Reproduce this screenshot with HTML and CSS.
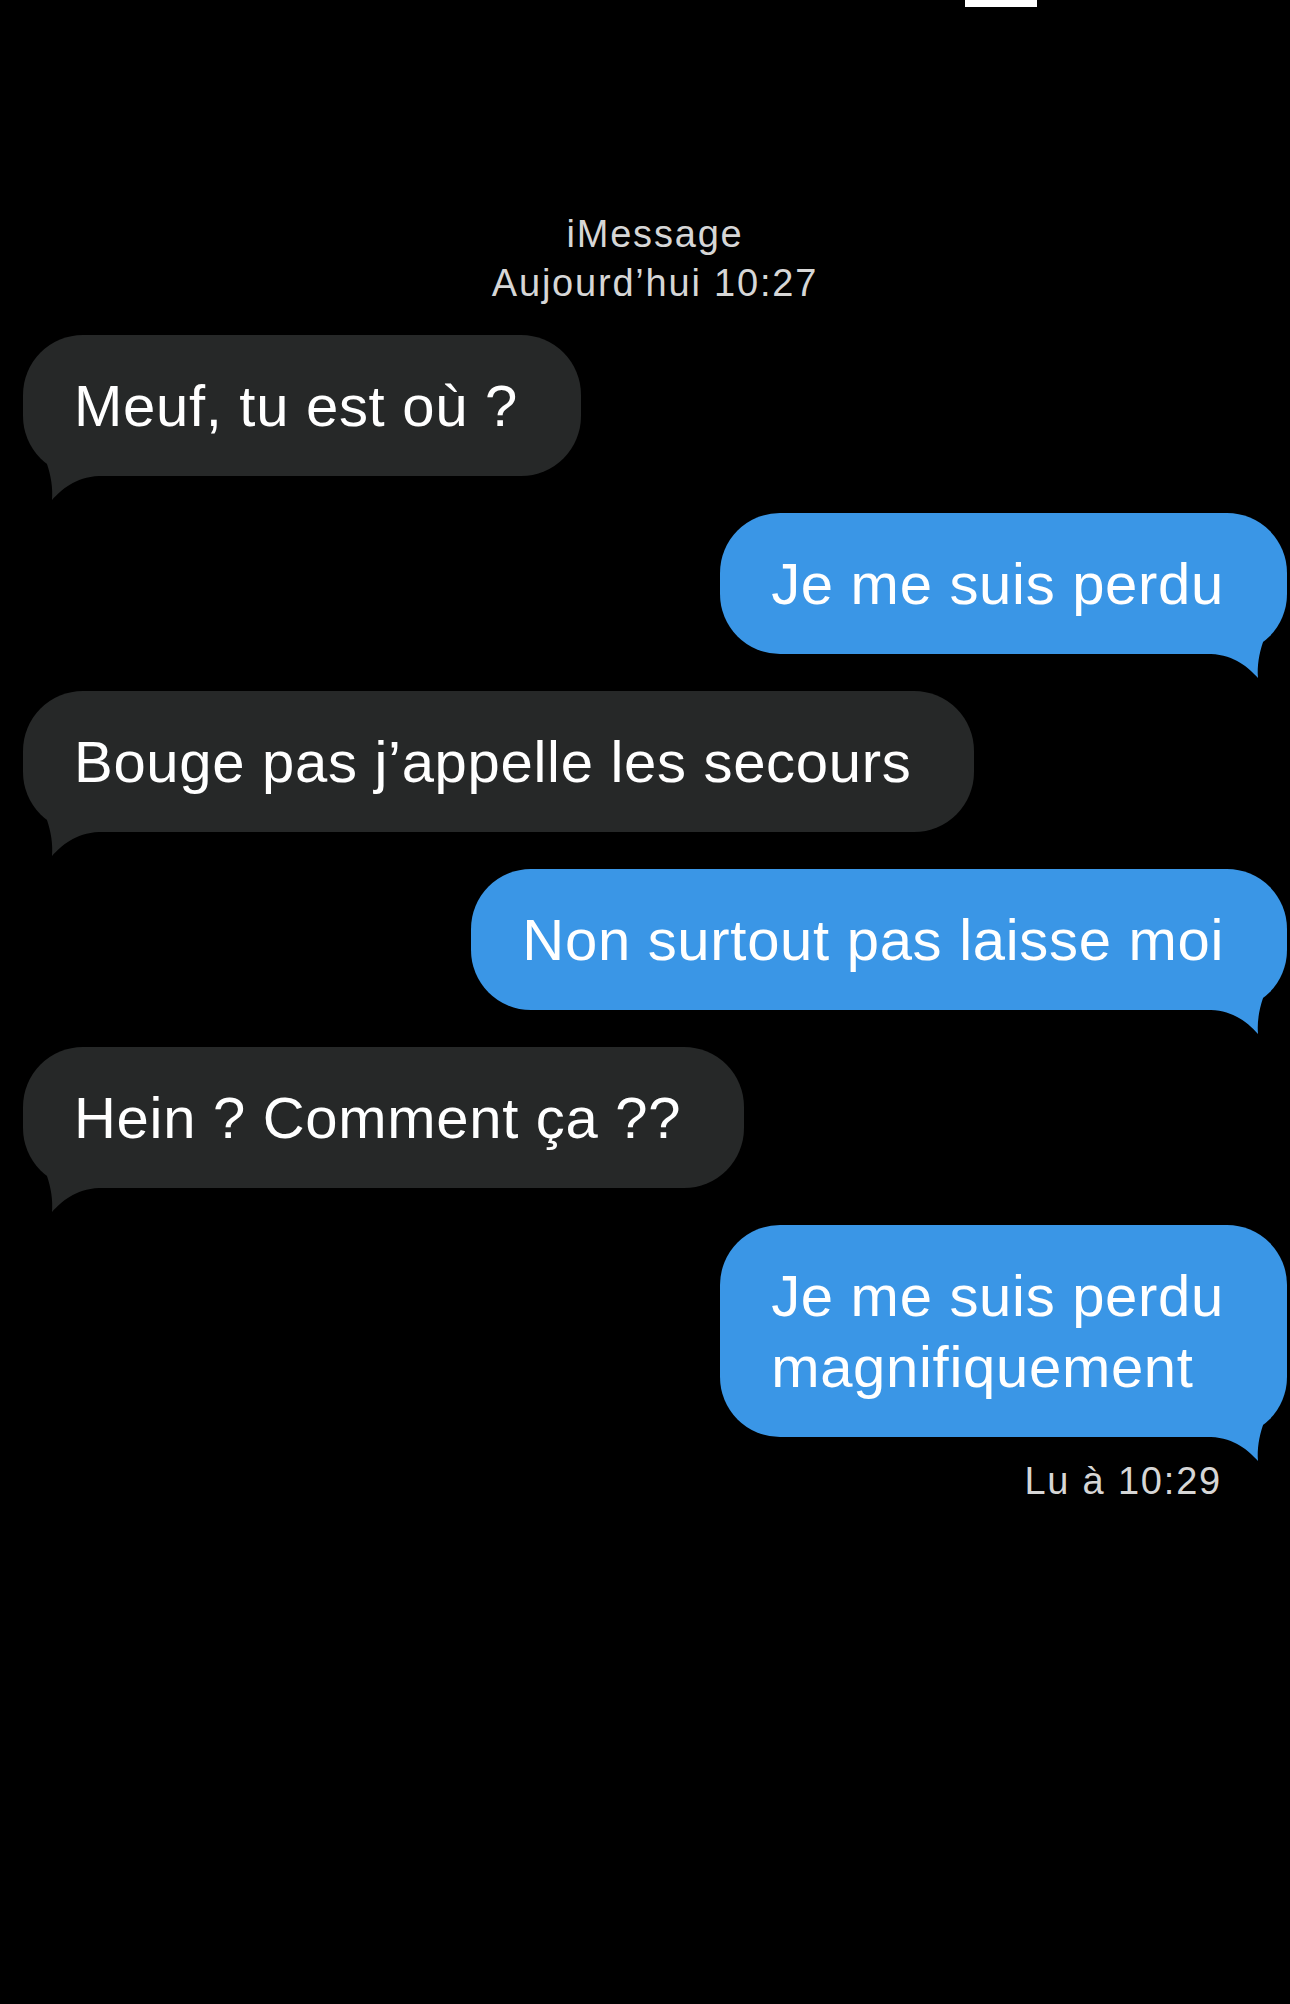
FILE: index.html
```html
<!DOCTYPE html>
<html lang="fr">
<head>
    <meta charset="UTF-8">
    <meta name="viewport" content="width=device-width, initial-scale=1.0">
    <title>iMessage</title>
    <link rel="stylesheet" href="styles.css">
</head>
<body>

<div class="top-bar">
    <span class="top-line"></span>
</div>

<div class="service">
    <div>iMessage</div>
    <div>Aujourd’hui 10:27</div>
</div>

<div class="thread">
    <div class="bubble them">
        Meuf, tu est où ?
        <svg class="tail" viewBox="0 0 80 60"><path d="M24 24 C28 36 30 48 29 60 C38 50 52 37 76 36 L76 24 Z"/></svg>
    </div>

    <div class="bubble me">
        Je me suis perdu
        <svg class="tail" viewBox="0 0 80 60"><path d="M24 24 C28 36 30 48 29 60 C38 50 52 37 76 36 L76 24 Z"/></svg>
    </div>

    <div class="bubble them">
        Bouge pas j’appelle les secours
        <svg class="tail" viewBox="0 0 80 60"><path d="M24 24 C28 36 30 48 29 60 C38 50 52 37 76 36 L76 24 Z"/></svg>
    </div>

    <div class="bubble me">
        Non surtout pas laisse moi
        <svg class="tail" viewBox="0 0 80 60"><path d="M24 24 C28 36 30 48 29 60 C38 50 52 37 76 36 L76 24 Z"/></svg>
    </div>

    <div class="bubble them">
        Hein ? Comment ça ??
        <svg class="tail" viewBox="0 0 80 60"><path d="M24 24 C28 36 30 48 29 60 C38 50 52 37 76 36 L76 24 Z"/></svg>
    </div>

    <div class="bubble me">
        Je me suis perdu<br>magnifiquement
        <svg class="tail" viewBox="0 0 80 60"><path d="M24 24 C28 36 30 48 29 60 C38 50 52 37 76 36 L76 24 Z"/></svg>
    </div>
</div>

<div class="receipt">Lu à 10:29</div>

</body>
</html>
```

FILE: styles.css
```css
body {
    margin: 0;
    background-color: #000;
    color: #fff;
    font-family: "Liberation Sans", Arial, sans-serif;
}

.top-bar {
    height: 8px;
    padding-left: 965px;
}

.top-line {
    display: block;
    width: 72px;
    height: 7px;
    background-color: #fff;
}

.service {
    margin: 202px 3px 0 23px;
    text-align: center;
    font-size: 38px;
    line-height: 49px;
    letter-spacing: 1.8px;
    color: #d6d6d6;
}

.thread {
    display: flex;
    flex-direction: column;
    gap: 37px;
    margin-top: 27px;
    padding: 0 3px 0 23px;
}

.bubble {
    position: relative;
    padding: 35px 63px 35px 51px;
    border-radius: 60px;
    font-size: 58px;
    line-height: 71px;
    letter-spacing: 0.7px;
    white-space: nowrap;
}

.tail {
    position: absolute;
    bottom: -24px;
    width: 80px;
    height: 60px;
}

.them {
    align-self: flex-start;
    background-color: #262828;
}

.them .tail {
    left: 0;
    fill: #262828;
}

.me {
    align-self: flex-end;
    background-color: #3a96e6;
}

.me .tail {
    right: 0;
    fill: #3a96e6;
    transform: scaleX(-1);
}

.receipt {
    margin: 20px 68px 0 0;
    text-align: right;
    font-size: 38px;
    line-height: 49px;
    letter-spacing: 1.8px;
    color: #d6d6d6;
}
```
